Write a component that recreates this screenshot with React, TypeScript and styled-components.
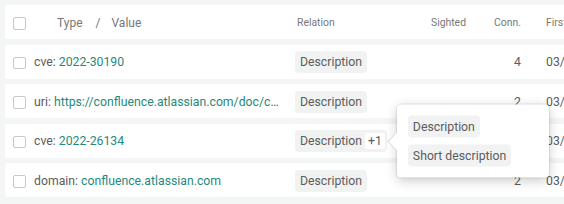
import React from "react";
import styled, { createGlobalStyle } from "styled-components";

const Global = createGlobalStyle`
  html, body { margin: 0; padding: 0; background: #f4f5f5; }
  body { font-family: Roboto, "Noto Sans", Arial, sans-serif; }
  * { box-sizing: border-box; }
`;

const Page = styled.div`
  width: 564px;
  height: 204px;
  overflow: hidden;
  padding: 5px 0 0 5px;
  background: #f4f5f5;
`;

const Table = styled.div`
  display: flex;
  flex-direction: column;
  gap: 5.5px;
  width: 720px;
`;

const Row = styled.div`
  display: grid;
  grid-template-columns: 29px 261px 105px 66px 55px 1fr;
  align-items: center;
  height: 34px;
  padding-top: 1px;
  background: #ffffff;
  border-radius: 2px;
  font-size: 12.25px;
  color: #5c5c5c;
`;

const CheckCell = styled.div`
  display: flex;
  align-items: center;
  padding-left: 8px;
  padding-top: 2px;
`;

const Checkbox = styled.span`
  display: block;
  width: 12.5px;
  height: 12.5px;
  border: 1px solid #c8c8c8;
  border-radius: 2px;
  background: #fff;
`;

const HeadLabel = styled.div<{ $align?: "left" | "right"; $pad?: number; $size?: number }>`
  font-size: ${(p) => p.$size ?? 10.4}px;
  color: #777777;
  text-align: ${(p) => p.$align ?? "left"};
  padding-left: ${(p) => p.$pad ?? 0}px;
  white-space: nowrap;
`;

const Sep = styled.span`
  margin: 0 11px 0 13px;
`;

const ValueCell = styled.div`
  overflow: hidden;
  white-space: nowrap;
  text-overflow: ellipsis;
  padding-right: 11px;
`;

const Value = styled.span`
  color: #1f8a7b;
`;

const RelCell = styled.div`
  display: flex;
  align-items: center;
`;

const Chip = styled.span`
  position: relative;
  display: inline-flex;
  align-items: center;
  height: 22px;
  padding: 0 5px;
  border-radius: 4px;
  background: #f1f2f2;
  color: #5c5c5c;
  font-size: 12.25px;
  white-space: nowrap;
`;

const ChipMore = styled(Chip)`
  padding-right: 2px;
`;

const Count = styled.span`
  display: inline-flex;
  align-items: center;
  height: 16px;
  margin-left: 3px;
  padding: 0 3px;
  background: #ffffff;
  border-radius: 2px;
`;

const Num = styled.div`
  text-align: right;
`;

const First = styled.div`
  padding-left: 25px;
  white-space: nowrap;
`;

const Popover = styled.div`
  position: absolute;
  left: calc(100% + 10px);
  top: 50%;
  transform: translateY(-50%);
  width: 152px;
  padding: 11px;
  display: flex;
  flex-direction: column;
  align-items: flex-start;
  gap: 7px;
  background: #ffffff;
  border-radius: 4px;
  box-shadow: 0 0 0 1px rgba(0, 0, 0, 0.07), 0 3px 12px rgba(0, 0, 0, 0.2);
  z-index: 10;

  &::before {
    content: "";
    position: absolute;
    left: -7px;
    top: 50%;
    width: 13px;
    height: 13px;
    background: #ffffff;
    border-left: 1px solid #dedede;
    border-bottom: 1px solid #dedede;
    transform: translateY(-50%) rotate(45deg);
  }
`;

type Item = {
  type: string;
  value: string;
  more?: boolean;
  conn: string;
};

const items: Item[] = [
  { type: "cve", value: "2022-30190", conn: "4" },
  { type: "uri", value: "https://confluence.atlassian.com/doc/confluence-security-advisory", conn: "2" },
  { type: "cve", value: "2022-26134", more: true, conn: "2" },
  { type: "domain", value: "confluence.atlassian.com", conn: "2" },
];

export default function App() {
  return (
    <Page>
      <Global />
      <Table>
        <Row>
          <CheckCell>
            <Checkbox />
          </CheckCell>
          <HeadLabel $size={12} $pad={23}>
            Type<Sep>/</Sep>Value
          </HeadLabel>
          <HeadLabel $pad={2}>Relation</HeadLabel>
          <HeadLabel $align="right">Sighted</HeadLabel>
          <HeadLabel $align="right">Conn.</HeadLabel>
          <HeadLabel $pad={25}>First seen</HeadLabel>
        </Row>
        {items.map((it, i) => (
          <Row key={i}>
            <CheckCell>
              <Checkbox />
            </CheckCell>
            <ValueCell>
              {it.type}: <Value>{it.value}</Value>
            </ValueCell>
            <RelCell>
              {it.more ? (
                <ChipMore>
                  Description<Count>+1</Count>
                  <Popover>
                    <Chip>Description</Chip>
                    <Chip>Short description</Chip>
                  </Popover>
                </ChipMore>
              ) : (
                <Chip>Description</Chip>
              )}
            </RelCell>
            <div />
            <Num>{it.conn}</Num>
            <First>03/22/2023</First>
          </Row>
        ))}
      </Table>
    </Page>
  );
}
